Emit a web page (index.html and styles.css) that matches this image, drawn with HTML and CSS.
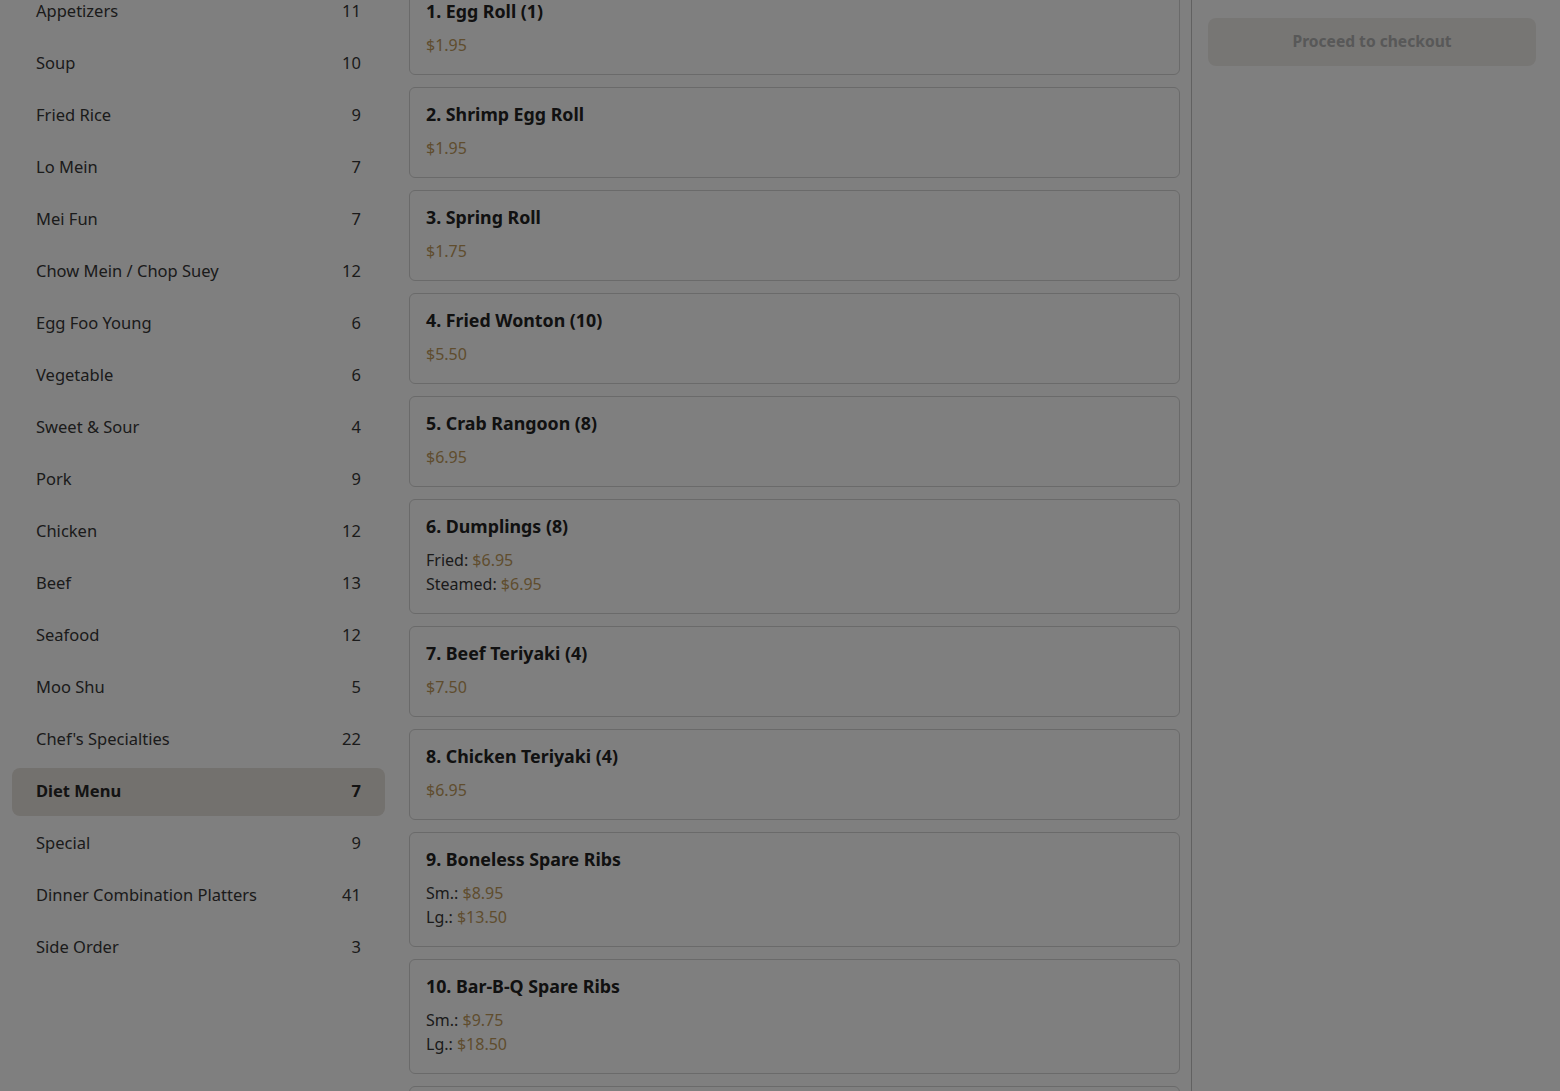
FILE: index.html
```html
<!DOCTYPE html>
<html lang="en">
<head>
<meta charset="utf-8">
<title>Menu</title>
<link rel="stylesheet" href="styles.css">
</head>
<body>
<div class="page">
  <nav class="sidebar">
    <ul class="cat-list">
      <li class="cat"><span>Appetizers</span><span>11</span></li>
      <li class="cat"><span>Soup</span><span>10</span></li>
      <li class="cat"><span>Fried Rice</span><span>9</span></li>
      <li class="cat"><span>Lo Mein</span><span>7</span></li>
      <li class="cat"><span>Mei Fun</span><span>7</span></li>
      <li class="cat"><span>Chow Mein / Chop Suey</span><span>12</span></li>
      <li class="cat"><span>Egg Foo Young</span><span>6</span></li>
      <li class="cat"><span>Vegetable</span><span>6</span></li>
      <li class="cat"><span>Sweet &amp; Sour</span><span>4</span></li>
      <li class="cat"><span>Pork</span><span>9</span></li>
      <li class="cat"><span>Chicken</span><span>12</span></li>
      <li class="cat"><span>Beef</span><span>13</span></li>
      <li class="cat"><span>Seafood</span><span>12</span></li>
      <li class="cat"><span>Moo Shu</span><span>5</span></li>
      <li class="cat"><span>Chef's Specialties</span><span>22</span></li>
      <li class="cat active"><span>Diet Menu</span><span>7</span></li>
      <li class="cat"><span>Special</span><span>9</span></li>
      <li class="cat"><span>Dinner Combination Platters</span><span>41</span></li>
      <li class="cat"><span>Side Order</span><span>3</span></li>
    </ul>
  </nav>

  <main class="menu">
    <div class="item"><h3 class="item-name">1. Egg Roll (1)</h3><div class="prices"><div class="price-line"><span class="price">$1.95</span></div></div></div>
    <div class="item"><h3 class="item-name">2. Shrimp Egg Roll</h3><div class="prices"><div class="price-line"><span class="price">$1.95</span></div></div></div>
    <div class="item"><h3 class="item-name">3. Spring Roll</h3><div class="prices"><div class="price-line"><span class="price">$1.75</span></div></div></div>
    <div class="item"><h3 class="item-name">4. Fried Wonton (10)</h3><div class="prices"><div class="price-line"><span class="price">$5.50</span></div></div></div>
    <div class="item"><h3 class="item-name">5. Crab Rangoon (8)</h3><div class="prices"><div class="price-line"><span class="price">$6.95</span></div></div></div>
    <div class="item"><h3 class="item-name">6. Dumplings (8)</h3><div class="prices"><div class="price-line">Fried: <span class="price">$6.95</span></div><div class="price-line">Steamed: <span class="price">$6.95</span></div></div></div>
    <div class="item"><h3 class="item-name">7. Beef Teriyaki (4)</h3><div class="prices"><div class="price-line"><span class="price">$7.50</span></div></div></div>
    <div class="item"><h3 class="item-name">8. Chicken Teriyaki (4)</h3><div class="prices"><div class="price-line"><span class="price">$6.95</span></div></div></div>
    <div class="item"><h3 class="item-name">9. Boneless Spare Ribs</h3><div class="prices"><div class="price-line">Sm.: <span class="price">$8.95</span></div><div class="price-line">Lg.: <span class="price">$13.50</span></div></div></div>
    <div class="item"><h3 class="item-name">10. Bar-B-Q Spare Ribs</h3><div class="prices"><div class="price-line">Sm.: <span class="price">$9.75</span></div><div class="price-line">Lg.: <span class="price">$18.50</span></div></div></div>
    <div class="item item-next"></div>
  </main>

  <aside class="cart">
    <button class="checkout" type="button" disabled>Proceed to checkout</button>
  </aside>
</div>
<div class="backdrop"></div>
</body>
</html>
```

FILE: styles.css
```css
html, body {
  margin: 0;
  padding: 0;
  height: 100%;
  overflow: hidden;
  background: #ffffff;
}

body {
  font-family: "Noto Sans", "Open Sans", sans-serif;
  color: #333333;
}

.page {
  display: grid;
  grid-template-columns: 397px 795px 1fr;
  height: 1091px;
  overflow: hidden;
}

.sidebar {
  padding: 0 12px;
}

.cat-list {
  list-style: none;
  margin: -12px 0 0;
  padding: 0;
  display: flex;
  flex-direction: column;
  gap: 4px;
}

.cat {
  height: 48px;
  box-sizing: border-box;
  padding: 0 24px 3px;
  border-radius: 8px;
  display: flex;
  align-items: center;
  justify-content: space-between;
  font-size: 16.5px;
  color: #363636;
}

.cat.active {
  background: #e6e2dc;
  font-weight: 700;
  color: #262626;
}

.menu {
  padding: 0 11px 0 12px;
  margin-top: -16px;
  display: flex;
  flex-direction: column;
  gap: 12px;
  border-right: 1px solid #c2c2c2;
}

.item {
  border: 1px solid #d4d4d4;
  border-radius: 6px;
  padding: 14px 16px 17px;
  background: #ffffff;
}

.item-next {
  height: 120px;
}

.item-name {
  margin: 0 0 10px;
  font-size: 17.8px;
  line-height: 24px;
  font-weight: 700;
  color: #222222;
}

.price-line {
  font-size: 16px;
  line-height: 24px;
  color: #363636;
}

.price {
  color: #c09a5c;
}

.cart {
  padding: 18px 24px 0 16px;
}

.checkout {
  display: block;
  width: 100%;
  height: 48px;
  border: 0;
  border-radius: 8px;
  background: #efede9;
  color: #b0b0b0;
  font-family: inherit;
  font-size: 15.6px;
  font-weight: 700;
  line-height: 46px;
  padding: 0 0 2px;
}

.backdrop {
  position: fixed;
  inset: 0;
  background: rgba(0, 0, 0, 0.5);
}
```
